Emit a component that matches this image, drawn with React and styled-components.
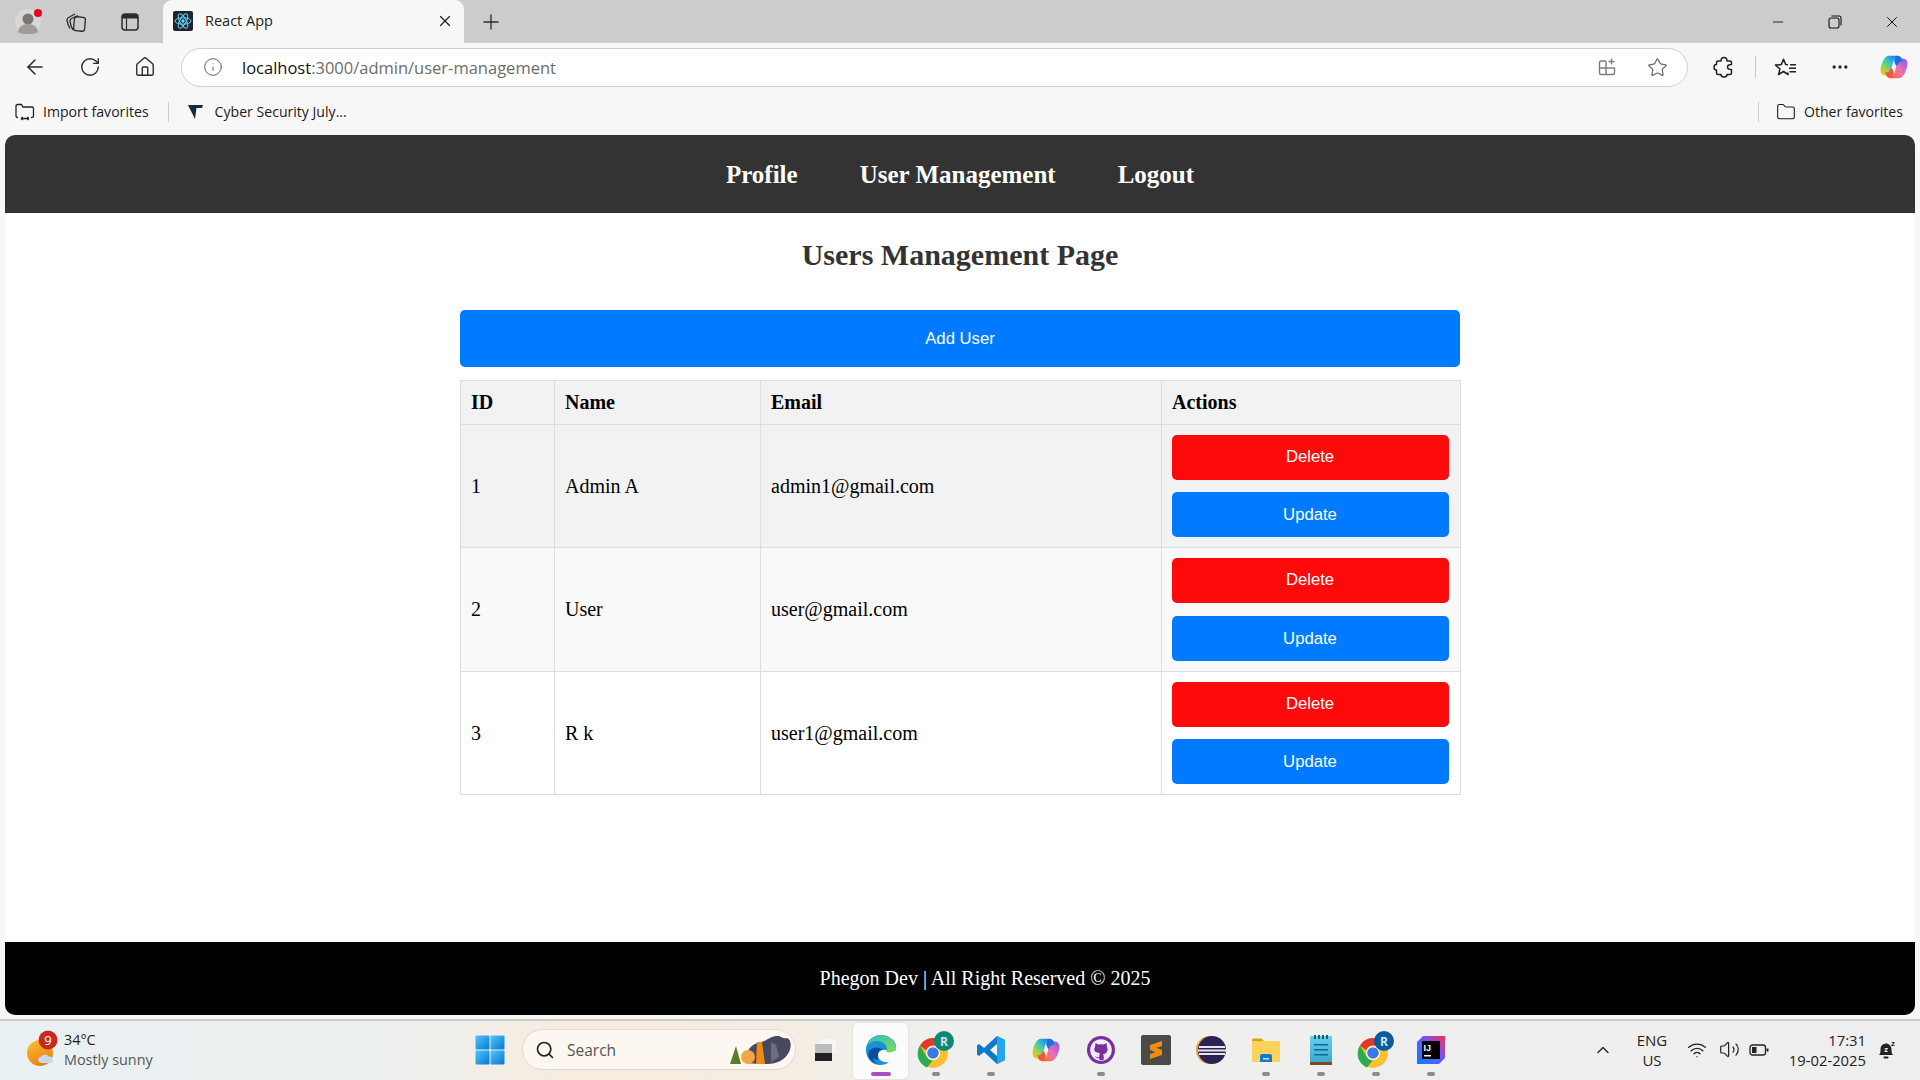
import styled, { createGlobalStyle } from "styled-components";
import { ArrowLeft, RotateCw, Home, Info, Star, Plus, X, Minus, Search, ChevronUp, Wifi, Volume2, MoreHorizontal, Folder } from "lucide-react";

const GlobalStyle = createGlobalStyle`
  html, body {
    margin: 0;
    padding: 0;
    height: 100%;
    overflow: hidden;
  }
  * {
    box-sizing: border-box;
  }
`;

const Screen = styled.div`
  display: flex;
  flex-direction: column;
  width: 1920px;
  height: 1080px;
  background: #f7f7f7;
  font-family: "Open Sans", "Noto Sans", sans-serif;
  color: #1a1a1a;
`;

/* browser frame */
const TabStrip = styled.div`
  display: flex;
  align-items: center;
  height: 43px;
  background: #cccccc;
  padding-left: 9px;
`;

const StripIcon = styled.div`
  display: flex;
  align-items: center;
  justify-content: center;
  width: ${(p) => p.$w || 50}px;
  height: 100%;
  color: #2b2b2b;
  flex-shrink: 0;
`;

const Tab = styled.div`
  display: flex;
  align-items: center;
  width: 301px;
  height: 43px;
  margin-left: 6px;
  padding: 0 10px 2px 10px;
  background: #f7f7f7;
  border-radius: 9px 9px 0 0;
  font-size: 14.5px;
  color: #222;
`;

const TabTitle = styled.span`
  margin-left: 12px;
  flex: 1;
`;

const WindowControls = styled.div`
  display: flex;
  margin-left: auto;
  height: 100%;
`;

const WindowButton = styled.div`
  display: flex;
  align-items: center;
  justify-content: center;
  width: 57px;
  color: #111;
`;

const Toolbar = styled.div`
  display: flex;
  align-items: center;
  height: 48px;
  padding: 0 0 0 7px;
  background: #f7f7f7;
`;

const ToolButton = styled.div`
  display: flex;
  align-items: center;
  justify-content: center;
  width: ${(p) => p.$w || 55}px;
  height: 36px;
  margin-left: ${(p) => p.$gap || 0}px;
  color: #2a2a2a;
  flex-shrink: 0;
`;

const AddressBar = styled.div`
  display: flex;
  align-items: center;
  width: 1507px;
  height: 39px;
  margin-left: 9px;
  padding-left: 21px;
  background: #fff;
  border: 1px solid #cfcfcf;
  border-radius: 20px;
  font-size: 16.5px;
  flex-shrink: 0;
`;

const Url = styled.div`
  margin-left: 19px;
  flex: 1;
  color: #6d6d6d;
  b {
    font-weight: 400;
    color: #111;
  }
`;

const ToolDivider = styled.div`
  width: 1px;
  height: 22px;
  background: #c8c8c8;
  flex-shrink: 0;
`;

const BookmarkBar = styled.div`
  display: flex;
  align-items: center;
  height: 44px;
  padding: 0 17px 3px 15px;
  background: #f7f7f7;
  font-size: 14.1px;
  color: #1c1c1c;
`;

const Bookmark = styled.div`
  display: flex;
  align-items: center;
  gap: ${(p) => p.$gap || 9}px;
`;

const BookmarkDivider = styled.div`
  width: 1px;
  height: 20px;
  margin: ${(p) => p.$margin};
  background: #cfcfcf;
`;

/* the page itself */
const PageFrame = styled.div`
  flex: 1;
  display: flex;
  flex-direction: column;
  padding: 0 5px;
  background: #f7f7f7;
  font-family: "Liberation Serif", "Times New Roman", serif;
  color: #000;
  min-height: 0;
`;

const Nav = styled.nav`
  display: flex;
  justify-content: center;
  align-items: center;
  gap: 62px;
  height: 78px;
  padding-top: 1px;
  background: #333;
  border-radius: 10px 10px 0 0;
`;

const NavLink = styled.a`
  color: #fff;
  font-size: 25px;
  font-weight: 700;
`;

const Main = styled.main`
  flex: 1;
  display: flex;
  flex-direction: column;
  align-items: center;
  background: #fff;
`;

const Heading = styled.h2`
  margin: 24px 0 0;
  height: 73px;
  font-size: 30px;
  line-height: 36px;
  font-weight: 700;
  color: #333;
`;

const AddButton = styled.button`
  width: 1000px;
  height: 57px;
  border: 0;
  border-radius: 5px;
  background: #007bff;
  color: #fff;
  font-family: "Liberation Sans", Arial, sans-serif;
  font-size: 16.7px;
`;

const UsersTable = styled.table`
  width: 1000px;
  margin-top: 13px;
  border-collapse: collapse;
  table-layout: fixed;
  font-size: 20px;
`;

const HeadCell = styled.th`
  width: ${(p) => p.$w}px;
  height: 44px;
  padding: 0 10px 0 10.5px;
  border: 1px solid #ddd;
  background: #f2f2f2;
  text-align: left;
  font-weight: 700;
`;

const Row = styled.tr`
  background: ${(p) => p.$bg};
`;

const Cell = styled.td`
  padding: 0 10px 0 10.5px;
  border: 1px solid #ddd;
`;

const ActionsCell = styled(Cell)`
  padding: 10px 11px 10px 10px;
`;

const ActionButton = styled.button`
  display: block;
  width: 100%;
  height: 45px;
  margin-top: ${(p) => p.$top || 0}px;
  padding: 0 0 ${(p) => (p.$danger ? 2 : 0)}px;
  border: 0;
  border-radius: 5px;
  background: ${(p) => (p.$danger ? "#ff0a0a" : "#007bff")};
  color: #fff;
  font-family: "Liberation Sans", Arial, sans-serif;
  font-size: 16.7px;
`;

const Footer = styled.footer`
  display: flex;
  align-items: center;
  justify-content: center;
  height: 73px;
  padding: 0 0 0 50px;
  background: #000;
  border-radius: 0 0 10px 10px;
  color: #fff;
  font-size: 20px;
`;

const FrameGap = styled.div`
  height: 4px;
  background: #f7f7f7;
`;

/* windows taskbar */
const Taskbar = styled.div`
  display: flex;
  align-items: center;
  height: 61px;
  border-top: 2px solid #c9c9c9;
  background: linear-gradient(90deg, #e9f0f3 0%, #edf0f0 20%, #f7ecdf 30%, #f5ede2 40%, #efefee 48%, #eeeeee 100%);
`;

const Weather = styled.div`
  display: flex;
  align-items: center;
  width: 468px;
  padding: 0 0 2px 26px;
  flex-shrink: 0;
`;

const WeatherText = styled.div`
  margin-left: 4px;
  font-size: 14.4px;
  line-height: 20px;
  color: #1c1c1c;
  span {
    display: block;
    color: #555;
  }
`;

const TaskSlot = styled.div`
  position: relative;
  display: flex;
  align-items: center;
  justify-content: center;
  width: ${(p) => p.$w || 55}px;
  height: 56px;
  padding-bottom: 2px;
  flex-shrink: 0;
  border-radius: 5px;
  background: ${(p) => (p.$active ? "#fbfbfb" : "transparent")};
  box-shadow: ${(p) => (p.$active ? "0 0 2px rgba(0,0,0,.15)" : "none")};
`;

const RunDot = styled.i`
  position: absolute;
  left: 50%;
  bottom: 3px;
  width: ${(p) => (p.$active ? 20 : 8)}px;
  height: 4px;
  margin-left: ${(p) => (p.$active ? -10 : -4)}px;
  border-radius: 2px;
  background: ${(p) => (p.$active ? "#a94fc2" : "#8a8a8a")};
`;

const SearchPill = styled.div`
  display: flex;
  align-items: center;
  width: 274px;
  height: 41px;
  margin: 0 0 2px 10px;
  padding: 0 2px 0 12px;
  background: #fcf8f1;
  border: 1px solid #e2d9cd;
  border-radius: 21px;
  font-size: 15.5px;
  color: #555;
  flex-shrink: 0;
`;

const SearchLabel = styled.span`
  margin-left: 12px;
  flex: 1;
`;

const Tray = styled.div`
  display: flex;
  align-items: center;
  margin-left: auto;
  padding: 0 19px 2px 0;
  color: #222;
`;

const TrayItem = styled.div`
  display: flex;
  align-items: center;
  justify-content: center;
  width: ${(p) => p.$w}px;
`;

const TrayChevron = styled(TrayItem)`
  padding-right: 4px;
`;

const Lang = styled.div`
  width: 54px;
  text-align: center;
  font-size: 15px;
  line-height: 20px;
`;

const Clock = styled.div`
  width: 90px;
  margin: 0 7px 0 1px;
  text-align: right;
  font-size: 14.8px;
  line-height: 20px;
`;

/* drawn icons */
const Avatar = () => (
  <svg width="30" height="30" viewBox="0 0 30 30">
    <circle cx="14" cy="15" r="13" fill="#d8d8d8" />
    <circle cx="14" cy="12" r="5.5" fill="#7b7774" />
    <path d="M4 25c1-6 5-8 10-8s9 2 10 8c-3 3-17 3-20 0z" fill="#a09c98" />
    <circle cx="24" cy="6" r="4" fill="#e3051b" />
  </svg>
);

const Collections = () => (
  <svg width="22" height="22" viewBox="0 0 22 22" fill="none" stroke="#2b2b2b" strokeWidth="1.3">
    <rect x="9" y="6" width="11" height="14" rx="2.5" transform="rotate(5 14.5 13)" />
    <path d="M8 19C6 16 5.500 13 5 10.500 5 8.500 6 7.500 7.500 7L13 4.500" />
    <path d="M5 17.500C3.500 15 2.500 12 2 9.500 2 7.500 3 6.500 4.500 6L10 3" />
  </svg>
);

const TabLayout = () => (
  <svg width="20" height="20" viewBox="0 0 20 20" fill="none" stroke="#2b2b2b" strokeWidth="1.500">
    <rect x="2" y="2" width="16" height="16" rx="3" />
    <path d="M5 2h10a3 3 0 0 1 3 3v1.500H2V5a3 3 0 0 1 3-3z" fill="#2b2b2b" stroke="none" />
    <path d="M6.500 6v12" strokeWidth="1.200" />
  </svg>
);

const ReactFavicon = () => (
  <svg width="20" height="20" viewBox="0 0 20 20">
    <rect width="20" height="20" rx="2" fill="#20232a" />
    <g fill="none" stroke="#61dafb" strokeWidth="1">
      <ellipse cx="10" cy="10" rx="8" ry="3.200" />
      <ellipse cx="10" cy="10" rx="8" ry="3.200" transform="rotate(60 10 10)" />
      <ellipse cx="10" cy="10" rx="8" ry="3.200" transform="rotate(120 10 10)" />
    </g>
    <circle cx="10" cy="10" r="1.700" fill="#61dafb" />
  </svg>
);

const RestoreIcon = () => (
  <svg width="14" height="14" viewBox="0 0 14 14" fill="none" stroke="#111" strokeWidth="1.100">
    <rect x="1" y="3" width="10" height="10" rx="2" />
    <path d="M3.500 1h7.500a2 2 0 0 1 2 2v7.500" />
  </svg>
);

const AddTabIcon = () => (
  <svg width="20" height="20" viewBox="0 0 20 20" fill="none" stroke="#7d7d7d" strokeWidth="1.400">
    <path d="M9 4H4a1.500 1.500 0 0 0-1.500 1.500V16A1.500 1.500 0 0 0 4 17.500h12a1.500 1.500 0 0 0 1.500-1.500v-5H2.500M9 4v13.500M14.500 1.500v6M11.500 4.500h6" />
  </svg>
);

const PuzzleIcon = () => (
  <svg width="22" height="22" viewBox="0 0 22 22" fill="none" stroke="#222" strokeWidth="1.500" strokeLinejoin="round">
    <path d="M8 5C8 2.500 9.500 1.500 11 1.500S14 2.500 14 5h3c1 0 1.500.5 1.500 1.500v2c-2.500 0-4 1.300-4 2.500 0 1.500 1.500 2.500 4 2.500V17c0 1-.5 1.500-1.500 1.500h-3c0 1.500-1.500 2.500-3 2.500s-3-1-3-2.500H5c-1 0-1.500-.5-1.500-1.500v-3C2 14 1 12.800 1 11.200s1-2.700 2.500-2.700v-2C3.500 5.500 4 5 5 5z" />
  </svg>
);

const FavoritesIcon = () => (
  <svg width="24" height="22" viewBox="0 0 24 22" fill="none" stroke="#222" strokeWidth="1.500" strokeLinejoin="round">
    <path d="M13.500 16.500l.6 2-4.600-3-4.900 3 1.300-5.700-4.400-3.700 5.800-.5 2.200-5.400 2.300 5.400 2.200.2" />
    <path d="M16 8.800h6M15 12.300h7M15.500 15.800h6.500" />
  </svg>
);

const CopilotIcon = ({ size = 30 }) => (
  <svg width={size} height={size} viewBox="0 0 28 28">
    <defs>
      <linearGradient id="copA" x1="0.900" y1="0" x2="0.100" y2="0.950">
        <stop offset="0" stopColor="#1b7fe8" />
        <stop offset=".4" stopColor="#36c3c8" />
        <stop offset=".7" stopColor="#8fd84e" />
        <stop offset="1" stopColor="#f8c31c" />
      </linearGradient>
      <linearGradient id="copB" x1="0.100" y1="0.950" x2="0.900" y2="0">
        <stop offset="0" stopColor="#f2703a" />
        <stop offset=".45" stopColor="#ee6fb4" />
        <stop offset="1" stopColor="#8a5cf0" />
      </linearGradient>
    </defs>
    <path d="M9.500 3.500H17c-2 1-3 3-3.500 5L11 18c-.7 2.700-2.200 4-4.500 4H6c-3 0-5-2.500-4.500-6 .5-5 3.500-12.500 8-12.500z" fill="url(#copA)" />
    <path d="M18.500 24.500H11c2-1 3-3 3.500-5L17 10c.7-2.700 2.200-4 4.500-4h.5c3 0 5 2.500 4.500 6-.5 5-3.500 12.500-8 12.500z" fill="url(#copB)" />
    <path d="M17 3.500c2.500 0 4 1.500 4.500 3.500l.5 2c-2.500 0-4 1-4.500 3l-1.500 1-2-4.500c.5-2.500 1-5 3-5z" fill="#1673e0" />
    <path d="M11 24.500c-2.500 0-4-1.500-4.500-3.500l-.5-2c2.500 0 4-1 4.500-3l1.500-1 2 4.500c-.5 2.500-1 5-3 5z" fill="#f2563c" />
  </svg>
);

const ImportIcon = () => (
  <svg width="20" height="20" viewBox="0 0 20 20" fill="none" stroke="#222" strokeWidth="1.300">
    <path d="M3 15.500H2.500A1.500 1.500 0 0 1 1 14V4a1.500 1.500 0 0 1 1.500-1.500h4L8 5h9a1.500 1.500 0 0 1 1.500 1.500V14a1.500 1.500 0 0 1-1.500 1.500h-1" />
    <path d="M6 16.500h8M6 16.500l1.800-1.600M6 16.500l1.800 1.600M14 16.500l-1.800-1.600M14 16.500l-1.800 1.600" />
  </svg>
);

const CyberLogo = () => (
  <svg width="18" height="18" viewBox="0 0 18 18">
    <path d="M1 2h15l-1 3H9.500L8 16z" fill="#1a2747" />
    <path d="M1 2l5 7 1-4z" fill="#1a2747" />
  </svg>
);

const WeatherIcon = () => (
  <svg width="34" height="40" viewBox="0 0 34 40">
    <defs>
      <linearGradient id="sunA" x1="0.200" y1="0" x2="0.700" y2="1">
        <stop offset="0" stopColor="#f8bf2a" />
        <stop offset="1" stopColor="#ee7a14" />
      </linearGradient>
    </defs>
    <circle cx="14" cy="23" r="13" fill="url(#sunA)" />
    <path d="M16 33c-3 0-4-1.500-4-3 0-2 1.500-3 3-3 1-3 6-3.500 7.500-.5 2.500-.5 4.500 1 4.500 3.500 0 1.500-1 3-3 3z" fill="#c3d8f2" />
    <circle cx="22" cy="10" r="9.500" fill="#c62b1e" />
    <text x="22" y="14.500" textAnchor="middle" fontSize="13" fill="#fff" fontFamily="Open Sans, sans-serif">9</text>
  </svg>
);

const StartIcon = () => (
  <svg width="30" height="30" viewBox="0 0 30 30">
    <defs>
      <linearGradient id="startA" x1="0" y1="0" x2="1" y2="1">
        <stop offset="0" stopColor="#4fc6f8" />
        <stop offset="1" stopColor="#0678d4" />
      </linearGradient>
    </defs>
    <rect x="0.500" y="0.500" width="14" height="14" rx="1" fill="url(#startA)" />
    <rect x="15.500" y="0.500" width="14" height="14" rx="1" fill="url(#startA)" />
    <rect x="0.500" y="15.500" width="14" height="14" rx="1" fill="url(#startA)" />
    <rect x="15.500" y="15.500" width="14" height="14" rx="1" fill="url(#startA)" />
  </svg>
);

const SearchArt = () => (
  <svg width="66" height="32" viewBox="0 0 66 32">
    <path d="M18 28c1-12 6-18 16-20 6-1 9-6 16-6 5 0 5 3 9 2 5 0 6 8 3 14-4 8-12 12-22 12-10 0-18 0-22-2z" fill="#474a5f" />
    <path d="M44 8l5 3 3 12-8 5z" fill="#6b6e82" />
    <path d="M30 8h5l3 22h-9z" fill="#f08a12" />
    <circle cx="21" cy="23" r="7" fill="#f2a646" />
    <path d="M9 12l5 18H3z" fill="#5a7d2a" />
  </svg>
);

const TaskViewIcon = () => (
  <svg width="26" height="26" viewBox="0 0 26 26">
    <rect x="7" y="2" width="17" height="15" fill="#f5f5f5" />
    <rect x="3" y="7" width="17" height="17" rx="1" fill="#bdbdbd" />
    <rect x="3" y="16" width="17" height="8" fill="#222" />
  </svg>
);

const EdgeIcon = () => (
  <svg width="32" height="32" viewBox="0 0 32 32">
    <defs>
      <linearGradient id="edgeA" x1="0" y1="0" x2="1" y2="1">
        <stop offset="0" stopColor="#30b8d0" />
        <stop offset="1" stopColor="#7fe04c" />
      </linearGradient>
    </defs>
    <path d="M16 1C7 1 1 8 1 16c0 9 7 15 14 15 4 0 7-1 9-3-6 1-11-2-11-7 0-3 2-5 5-5s6 1 12 1c1-2 1-3 1-5C31 7 24 1 16 1z" fill="#1a8fd8" />
    <path d="M13 21c0-3 2-5 5-5-4-4-11-3-14 1-2 5 1 11 8 13-3-2-4-5-4-7 1 2 3 3 5 3-.3-1.500 0-3.500 0-5z" fill="#0b4f9c" />
    <path d="M16 1C9 1 3 6 2 12c2-3 6-5 10-5 6 0 10 4 10 8 0 1-.5 2-1 3 4 1 8 0 10-3 .5-7-6-14-15-14z" fill="url(#edgeA)" />
  </svg>
);

const ChromeIcon = ({ badge, badgeColor }) => (
  <svg width="38" height="38" viewBox="0 0 38 38">
    <g transform="translate(1 6)">
      <circle cx="15" cy="16" r="15" fill="#fbc02d" />
      <path d="M15 1a15 15 0 0 1 13 7.500H15a7.500 7.500 0 0 0-7 5L2 8.500A15 15 0 0 1 15 1z" fill="#e2392d" />
      <path d="M2 8.500l6.500 11a7.500 7.500 0 0 0 6 4L9 30.500A15 15 0 0 1 2 8.500z" fill="#2da94f" />
      <circle cx="15" cy="16" r="7" fill="#fff" />
      <circle cx="15" cy="16" r="5.800" fill="#3b78e7" />
    </g>
    <circle cx="27" cy="10" r="10" fill={badgeColor} />
    <text x="27" y="14.500" textAnchor="middle" fontSize="12" fontWeight="700" fill="#cfe6ea" fontFamily="Open Sans, sans-serif">{badge}</text>
  </svg>
);

const VsCodeIcon = () => (
  <svg width="30" height="30" viewBox="0 0 30 30">
    <path d="M21 1l8 4v20l-8 4L8 17l-5 4-2-1.500V10.500L3 9l5 4z" fill="#0a7bc6" />
    <path d="M21 1l8 4v20l-8 4z" fill="#26a4ec" />
    <path d="M21 9l-7 6 7 6z" fill="#f3f3f3" />
  </svg>
);

const GithubIcon = () => (
  <svg width="30" height="30" viewBox="0 0 30 30">
    <circle cx="15" cy="15" r="14" fill="#7a2fa0" />
    <circle cx="15" cy="15" r="10.800" fill="#f3ecf6" />
    <path d="M9.500 8l3 1.500a9 9 0 0 1 5 0l3-1.500.5 4c1 1.500 1 5-1.500 6.500-1 .5-2 .7-2.500.8.500.5.700 1.200.700 2v3.700h-4.400V23c-2 .5-3.500 0-4.500-2 1 .5 2 2 4.500 1v-1.700c0-.8.200-1.500.7-2-.5-.1-1.500-.3-2.500-.8C7.500 17 8 13.500 9 12z" fill="#7a2fa0" />
  </svg>
);

const SublimeIcon = () => (
  <svg width="30" height="30" viewBox="0 0 30 30">
    <rect width="30" height="30" rx="2" fill="#4a4a4a" />
    <path d="M21 6v5L9 15v-5zM21 15v5L9 24v-5zM9 10l12 5v5L9 15z" fill="#f08c14" />
  </svg>
);

const EclipseIcon = () => (
  <svg width="30" height="30" viewBox="0 0 30 30">
    <circle cx="14" cy="15" r="14" fill="#e89a34" />
    <circle cx="16" cy="15" r="14" fill="#2c2255" />
    <path d="M3 11h26v2H3zM2 14.500h28v2H2zM3 18h26v2H3z" fill="#e9e6f2" />
  </svg>
);

const FolderIcon = () => (
  <svg width="30" height="30" viewBox="0 0 30 30">
    <path d="M1 5a1.500 1.500 0 0 1 1.500-1.500h8l3 3H1z" fill="#dc9f12" />
    <rect x="1" y="6" width="28" height="21" rx="1" fill="#fcd35a" />
    <path d="M9 27v-6a2 2 0 0 1 2-2h8a2 2 0 0 1 2 2v6z" fill="#1479c9" />
    <rect x="12" y="23" width="6" height="1.500" fill="#bfe0f7" />
  </svg>
);

const NotepadIcon = () => (
  <svg width="26" height="32" viewBox="0 0 26 32">
    <defs>
      <linearGradient id="padA" x1="0" y1="0" x2="0" y2="1">
        <stop offset="0" stopColor="#66cdec" />
        <stop offset="1" stopColor="#3aa8cc" />
      </linearGradient>
    </defs>
    <rect x="2" y="2" width="22" height="28" rx="1" fill="url(#padA)" />
    <rect x="2" y="28" width="22" height="3" fill="#7a4a28" />
    <path d="M6 10h14v1.500H6zM6 15h14v1.500H6zM6 20h14v1.500H6z" fill="#0b6d8e" />
    <path d="M6 1h2v4H6zM10 1h2v4h-2zM14 1h2v4h-2zM18 1h2v4h-2z" fill="#11607c" />
  </svg>
);

const IntellijIcon = () => (
  <svg width="30" height="30" viewBox="0 0 30 30">
    <defs>
      <linearGradient id="ijA" x1="0" y1="1" x2="1" y2="0">
        <stop offset="0" stopColor="#087cfa" />
        <stop offset=".55" stopColor="#6b57ff" />
        <stop offset="1" stopColor="#fe2857" />
      </linearGradient>
    </defs>
    <path d="M7 1h22v22l-6 6H1V7z" fill="url(#ijA)" />
    <rect x="6" y="6" width="18" height="18" fill="#000" />
    <text x="7.500" y="15.500" fontSize="9" fontWeight="700" fill="#fff" fontFamily="Liberation Sans, sans-serif">IJ</text>
    <rect x="8" y="20" width="7" height="1.500" fill="#fff" />
  </svg>
);

const BatteryIcon = () => (
  <svg width="20" height="14" viewBox="0 0 20 14" fill="none" stroke="#222" strokeWidth="1.300">
    <rect x="1" y="2" width="15.500" height="10" rx="2.500" />
    <rect x="3" y="4" width="4.500" height="6" fill="#222" stroke="none" />
    <path d="M18.500 5.500v3" strokeWidth="2" />
  </svg>
);

const BellSnooze = () => (
  <svg width="20" height="22" viewBox="0 0 20 22">
    <path d="M2 16c1.500-1.500 1.500-3 1.500-6A5.500 5.500 0 0 1 9 4.500c3 0 5.500 2.500 5.500 5.500 0 3 0 4.500 1.500 6z" fill="#222" />
    <rect x="6.500" y="17.500" width="5" height="2" rx="1" fill="#222" />
    <text x="9" y="13" textAnchor="middle" fontSize="7.500" fontWeight="700" fill="#fff" fontFamily="Liberation Sans, sans-serif">z</text>
    <text x="16" y="7" textAnchor="middle" fontSize="8" fontWeight="700" fill="#222" fontFamily="Liberation Sans, sans-serif">z</text>
  </svg>
);

const users = [
  { id: 1, name: "Admin A", email: "admin1@gmail.com", bg: "#f2f2f2", gap: 12 },
  { id: 2, name: "User", email: "user@gmail.com", bg: "#f9f9f9", gap: 13 },
  { id: 3, name: "R k", email: "user1@gmail.com", bg: "#ffffff", gap: 12 },
];

const taskIcons = [
  { key: "edge", icon: <EdgeIcon />, active: true, dot: true },
  { key: "chrome1", icon: <ChromeIcon badge="R" badgeColor="#0d8577" />, dot: true },
  { key: "vscode", icon: <VsCodeIcon />, dot: true },
  { key: "copilot", icon: <CopilotIcon /> },
  { key: "github", icon: <GithubIcon />, dot: true },
  { key: "sublime", icon: <SublimeIcon /> },
  { key: "eclipse", icon: <EclipseIcon /> },
  { key: "folder", icon: <FolderIcon />, dot: true },
  { key: "notepad", icon: <NotepadIcon />, dot: true },
  { key: "chrome2", icon: <ChromeIcon badge="R" badgeColor="#0b5c9e" />, dot: true },
  { key: "idea", icon: <IntellijIcon />, dot: true },
];

function App() {
  return (
    <Screen>
      <GlobalStyle />

      <TabStrip>
        <StripIcon $w={40}><Avatar /></StripIcon>
        <StripIcon $w={53}><Collections /></StripIcon>
        <StripIcon $w={55}><TabLayout /></StripIcon>
        <Tab>
          <ReactFavicon />
          <TabTitle>React App</TabTitle>
          <X size={18} strokeWidth={1.6} />
        </Tab>
        <StripIcon $w={54}><Plus size={24} strokeWidth={1.3} /></StripIcon>
        <WindowControls>
          <WindowButton><Minus size={16} strokeWidth={1.3} /></WindowButton>
          <WindowButton><RestoreIcon /></WindowButton>
          <WindowButton><X size={18} strokeWidth={1.3} /></WindowButton>
        </WindowControls>
      </TabStrip>

      <Toolbar>
        <ToolButton><ArrowLeft size={24} strokeWidth={1.5} /></ToolButton>
        <ToolButton><RotateCw size={22} strokeWidth={1.5} /></ToolButton>
        <ToolButton><Home size={22} strokeWidth={1.5} /></ToolButton>
        <AddressBar>
          <Info size={20} strokeWidth={1.2} color="#666" />
          <Url><b>localhost</b>:3000/admin/user-management</Url>
          <ToolButton $w={50}><AddTabIcon /></ToolButton>
          <ToolButton $w={50}><Star size={21} strokeWidth={1.4} color="#6d6d6d" /></ToolButton>
          <ToolButton $w={5} />
        </AddressBar>
        <ToolButton $w={62} $gap={5}><PuzzleIcon /></ToolButton>
        <ToolDivider />
        <ToolButton $w={60}><FavoritesIcon /></ToolButton>
        <ToolButton $w={48}><MoreHorizontal size={20} strokeWidth={2} /></ToolButton>
        <ToolButton $w={60}><CopilotIcon /></ToolButton>
      </Toolbar>

      <BookmarkBar>
        <Bookmark $gap={8}>
          <ImportIcon />
          Import favorites
        </Bookmark>
        <BookmarkDivider $margin="0 18px 0 19px" />
        <Bookmark $gap={10}>
          <CyberLogo />
          Cyber Security July...
        </Bookmark>
        <BookmarkDivider $margin="0 17px 0 auto" />
        <Bookmark $gap={8}>
          <Folder size={20} strokeWidth={1.3} />
          Other favorites
        </Bookmark>
      </BookmarkBar>

      <PageFrame>
        <Nav>
          <NavLink>Profile</NavLink>
          <NavLink>User Management</NavLink>
          <NavLink>Logout</NavLink>
        </Nav>
        <Main>
          <Heading>Users Management Page</Heading>
          <AddButton>Add User</AddButton>
          <UsersTable>
            <thead>
              <tr>
                <HeadCell $w={94}>ID</HeadCell>
                <HeadCell $w={206}>Name</HeadCell>
                <HeadCell $w={401}>Email</HeadCell>
                <HeadCell $w={299}>Actions</HeadCell>
              </tr>
            </thead>
            <tbody>
              {users.map((user) => (
                <Row key={user.id} $bg={user.bg}>
                  <Cell>{user.id}</Cell>
                  <Cell>{user.name}</Cell>
                  <Cell>{user.email}</Cell>
                  <ActionsCell>
                    <ActionButton $danger>Delete</ActionButton>
                    <ActionButton $top={user.gap}>Update</ActionButton>
                  </ActionsCell>
                </Row>
              ))}
            </tbody>
          </UsersTable>
        </Main>
        <Footer>Phegon Dev | All Right Reserved © 2025</Footer>
        <FrameGap />
      </PageFrame>

      <Taskbar>
        <Weather>
          <WeatherIcon />
          <WeatherText>
            34°C
            <span>Mostly sunny</span>
          </WeatherText>
        </Weather>
        <TaskSlot $w={44}><StartIcon /></TaskSlot>
        <SearchPill>
          <Search size={20} strokeWidth={2} color="#222" />
          <SearchLabel>Search</SearchLabel>
          <SearchArt />
        </SearchPill>
        <TaskSlot $w={57}><TaskViewIcon /></TaskSlot>
        {taskIcons.map((item) => (
          <TaskSlot key={item.key} $active={item.active}>
            {item.icon}
            {item.dot && <RunDot $active={item.active} />}
          </TaskSlot>
        ))}
        <Tray>
          <TrayChevron $w={40}><ChevronUp size={20} strokeWidth={1.6} /></TrayChevron>
          <Lang>ENG<br />US</Lang>
          <TrayItem $w={36}><Wifi size={20} strokeWidth={1.6} /></TrayItem>
          <TrayItem $w={28}><Volume2 size={21} strokeWidth={1.4} /></TrayItem>
          <TrayItem $w={32}><BatteryIcon /></TrayItem>
          <Clock>17:31<br />19-02-2025</Clock>
          <TrayItem $w={28}><BellSnooze /></TrayItem>
        </Tray>
      </Taskbar>
    </Screen>
  );
}

export default App;
